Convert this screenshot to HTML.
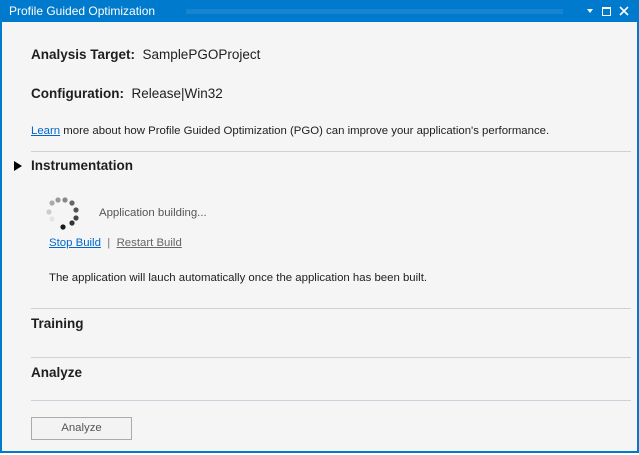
<!DOCTYPE html>
<html><head><style>
body{margin:0;width:639px;height:455px;overflow:hidden;font-family:"Liberation Sans",sans-serif;}
.win{position:absolute;left:0;top:0;width:635px;height:451px;border:2px solid #007acc;border-top:none;background:#f5f5f5;}
.tb{position:absolute;left:0;top:0;width:639px;height:22px;background:#007acc;color:#fff;font-size:12px;}
.t{position:absolute;color:#1e1e1e;white-space:nowrap}
.b{font-weight:bold;font-size:13.5px}
.hr{position:absolute;left:31px;right:8px;height:1px;background:#cfd0dc}
a{color:#0066cc;text-decoration:underline}
</style></head><body>
<div class="win"></div>
<div class="tb">
<span style="position:absolute;left:9px;top:4px">Profile Guided Optimization</span>
<div style="position:absolute;left:186px;top:9px;width:377px;height:5px;background-image:radial-gradient(circle,#4f9fdb 0.6px,transparent 0.8px);background-size:2px 2px"></div>
<div style="position:absolute;left:587px;top:9px;width:0;height:0;border-left:3.5px solid transparent;border-right:3.5px solid transparent;border-top:4px solid #fff"></div>
<div style="position:absolute;left:602px;top:7px;width:7px;height:6px;border:1px solid #fff;border-top-width:2px"></div>
<svg style="position:absolute;left:619px;top:6px" width="10" height="10"><path d="M1 1L9 9M9 1L1 9" stroke="#fff" stroke-width="1.6"/></svg>
</div>
<div class="t b" style="left:31px;top:47px;font-weight:bold">Analysis Target:&nbsp; <span style="font-weight:normal">SamplePGOProject</span></div>
<div class="t b" style="left:31px;top:86px">Configuration:&nbsp; <span style="font-weight:normal">Release|Win32</span></div>
<div class="t" style="left:31px;top:125px;font-size:11.4px"><a>Learn</a> more about how Profile Guided Optimization (PGO) can improve your application's performance.</div>
<div class="hr" style="top:151px"></div>
<div style="position:absolute;left:14px;top:161px;width:0;height:0;border-top:5px solid transparent;border-bottom:5px solid transparent;border-left:8px solid #000"></div>
<div class="t b" style="left:31px;top:158px">Instrumentation</div>
<svg style="position:absolute;left:0;top:0" width="100" height="240">
<circle cx="52" cy="203" r="2.6" fill="#aaa"/><circle cx="58" cy="200" r="2.6" fill="#999"/><circle cx="65" cy="200" r="2.6" fill="#888"/>
<circle cx="72" cy="203" r="2.6" fill="#666"/><circle cx="76" cy="210" r="2.6" fill="#555"/><circle cx="76" cy="218" r="2.6" fill="#444"/>
<circle cx="72" cy="223" r="2.6" fill="#333"/><circle cx="63" cy="227" r="2.6" fill="#1a1a1a"/>
<circle cx="49" cy="212" r="2.6" fill="#ccc"/><circle cx="52" cy="219" r="2.6" fill="#e4e4e4"/>
</svg>
<div class="t" style="left:99px;top:207px;font-size:11.4px;color:#555">Application building...</div>
<div class="t" style="left:49px;top:237px;font-size:11.4px"><a>Stop Build</a> <span style="color:#777">&nbsp;|&nbsp;</span> <span style="color:#666;text-decoration:underline">Restart Build</span></div>
<div class="t" style="left:49px;top:272px;font-size:11.4px">The application will lauch automatically once the application has been built.</div>
<div class="hr" style="top:308px"></div>
<div class="t b" style="left:31px;top:316px">Training</div>
<div class="hr" style="top:357px"></div>
<div class="t b" style="left:31px;top:365px">Analyze</div>
<div class="hr" style="top:400px"></div>
<div style="position:absolute;left:31px;top:417px;width:99px;height:21px;border:1px solid #ababab;background:#f3f3f3;color:#555;font-size:11.4px;text-align:center;line-height:21px">Analyze</div>
</body></html>
